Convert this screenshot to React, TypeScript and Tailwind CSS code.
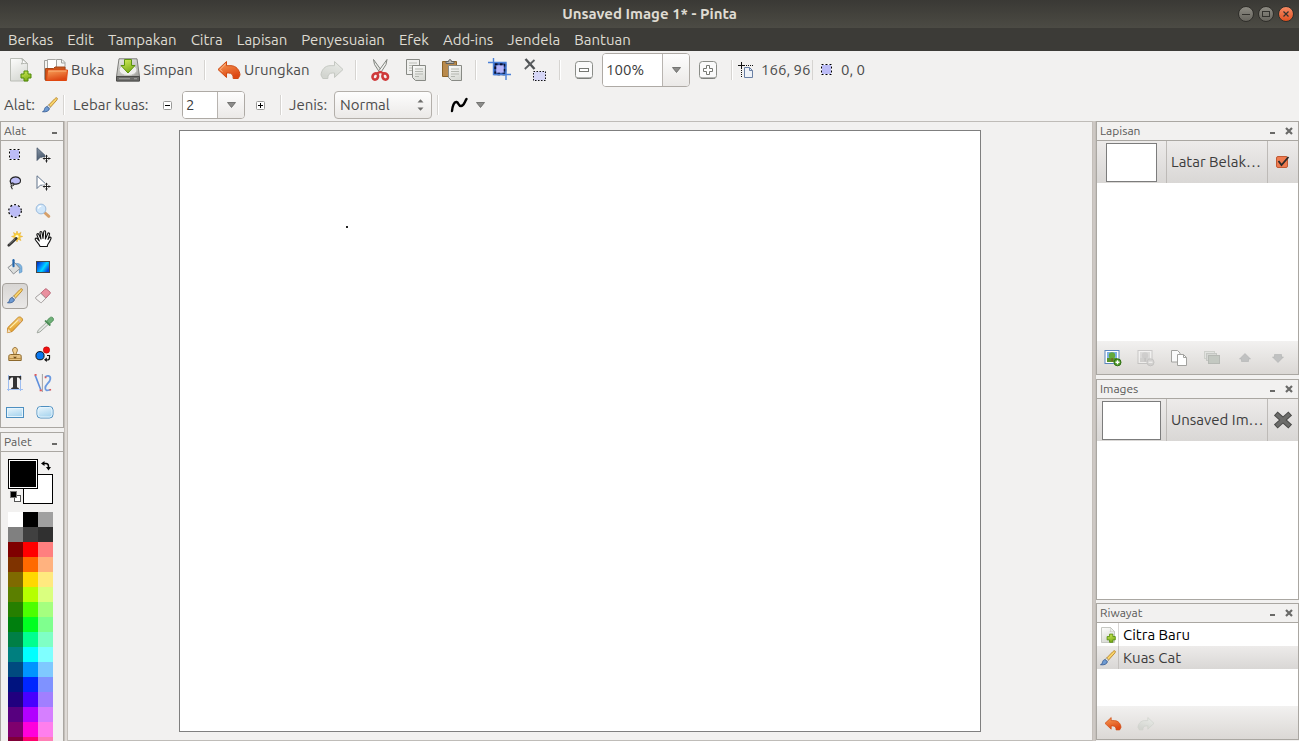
import { useState, type ReactNode } from "react";

/* ---------- shared drawings ---------- */

type IconProps = { className?: string };

function Svg({ size = 16, view, className, children }: { size?: number; view?: number; className?: string; children: ReactNode }) {
  const box = view ?? size;
  return (
    <svg width={size} height={size} viewBox={`0 0 ${box} ${box}`} fill="none" aria-hidden="true" className={`shrink-0 ${className ?? ""}`}>
      {children}
    </svg>
  );
}

function Gradients() {
  const grads: [string, string, string][] = [
    ["g-page", "#fdfdfc", "#d9dbd6"],
    ["g-orange", "#f9a25a", "#dd4814"],
    ["g-green", "#d2ee5a", "#7fae1b"],
    ["g-steel", "#ecece9", "#a3a39f"],
    ["g-grey", "#eceeea", "#d3d5d0"],
    ["g-sky", "#eef8fd", "#a9d5ef"],
    ["g-gold", "#fbdc7c", "#e09a2a"],
    ["g-arrow", "#8b98a8", "#47586c"],
  ];
  return (
    <svg width="0" height="0" className="absolute" aria-hidden="true">
      <defs>
        {grads.map(([id, a, b]) => (
          <linearGradient key={id} id={id} x1="0" y1="0" x2="0.4" y2="1">
            <stop offset="0" stopColor={a} />
            <stop offset="1" stopColor={b} />
          </linearGradient>
        ))}
        <linearGradient id="g-blue" x1="0" y1="0" x2="1" y2="0.6">
          <stop offset="0" stopColor="#0018b8" />
          <stop offset="0.45" stopColor="#0090ff" />
          <stop offset="0.65" stopColor="#00d8ff" />
          <stop offset="1" stopColor="#0048e0" />
        </linearGradient>
      </defs>
    </svg>
  );
}

function Plus({ x, y, s = 1 }: { x: number; y: number; s?: number }) {
  return (
    <path
      transform={`translate(${x} ${y}) scale(${s})`}
      d="M3.5.5h4v3h3v4h-3v3h-4v-3h-3v-4h3z"
      fill="url(#g-green)"
      stroke="#4e8a06"
    />
  );
}

const NewIcon = () => (
  <Svg size={24}>
    <path d="M2.5 .5h12l5 5v17.500h-17z" fill="url(#g-page)" stroke="#babdb6" />
    <path d="M13.500 .5c1.500 1.800 1.300 4-.2 5.500 2.500-.8 4.500-.8 6.200-.5z" fill="#fff" stroke="#b0b3ac" />
    <Plus x={12.500} y={12.500} />
  </Svg>
);

const NewSmallIcon = () => (
  <Svg>
    <path d="M1.500 .5h9l4 4v11h-13z" fill="url(#g-page)" stroke="#c6c8c3" />
    <path d="M10.500 .5c.8 1.500.4 3-.5 4 2-.5 3.500-.4 4.500 0z" fill="#fff" stroke="#bfc1bb" strokeWidth=".8" />
    <Plus x={6.700} y={6.700} s={0.82} />
  </Svg>
);

const OpenIcon = () => (
  <Svg size={24}>
    <path d="M.5 2.500h6v19h-6z" fill="#f4f4f2" stroke="#a0a09c" />
    <path d="M3.500 1.500h8l3 3v10h-11z" fill="#fff" stroke="#a8a8a4" />
    <path d="M12.500 1.500h5.500l3 3v8h-8.500z" fill="#f6f6f4" stroke="#a0a09c" />
    <path d="M17.500 1.500v3.500h3.500" stroke="#a0a09c" />
    <path d="M1.500 22.500v-12h8l1.500-1.500h10v13.500z" fill="#c9571c" stroke="#a8481a" />
    <path d="M2.500 22.500l1-10.500h20l-1 10.500z" fill="url(#g-orange)" stroke="#e0470f" />
    <path d="M4.500 13h18" stroke="#f9b37a" />
  </Svg>
);

const SaveIcon = () => (
  <Svg size={24}>
    <path d="M3 .8h18l2.500 17.700v4.500h-23v-4.500z" fill="url(#g-steel)" stroke="#7c7c79" />
    <path d="M.5 18.500h23v4.500h-23z" fill="#6c6c6a" stroke="#4a4a48" />
    <path d="M3 20.700h11M18 20.700h3" stroke="#a2a29f" />
    <ellipse cx="12" cy="12" rx="9" ry="5.500" fill="#efefed" stroke="#c0c0bc" />
    <path d="M8.500 1.500h7v6h3.500l-7 7.500-7-7.500h3.500z" fill="url(#g-green)" stroke="#5b920f" />
  </Svg>
);

const UNDO_PATH = "M9.500 3.500v4.200h4.500c5 0 8.700 4.300 9 9.300l-1.800 3.500h-5c.3-3.800-1.700-5.500-4.700-5.500h-2v4.500L1 11.500z";

const UndoIcon = () => (
  <Svg size={24}>
    <path d={UNDO_PATH} fill="url(#g-orange)" stroke="#cf4a12" strokeLinejoin="round" />
    <path d="M8.500 6l-5.500 5.500 2.500 2" stroke="#fcc39a" strokeWidth=".8" />
  </Svg>
);
const RedoIcon = () => (
  <Svg size={24}>
    <path d={UNDO_PATH} transform="matrix(-1 0 0 1 24 0)" fill="url(#g-grey)" stroke="#c5c8c2" strokeLinejoin="round" />
  </Svg>
);
const UndoSmall = () => (
  <svg width="18" height="16" viewBox="0 0 24 22" aria-hidden="true">
    <path d={UNDO_PATH} fill="url(#g-orange)" stroke="#cf4a12" strokeLinejoin="round" />
  </svg>
);
const RedoSmall = () => (
  <svg width="18" height="16" viewBox="0 0 24 22" aria-hidden="true">
    <path d={UNDO_PATH} transform="matrix(-1 0 0 1 24 0)" fill="url(#g-grey)" stroke="#cfd1cc" strokeLinejoin="round" />
  </svg>
);

const CutIcon = () => (
  <Svg size={24}>
    <path d="M5.500 1.500l1 5 5.500 8.500 1.500-2.500z" fill="#e8e9e6" stroke="#82857f" strokeLinejoin="round" />
    <path d="M19 1.500l-1 5-5.500 8.500-1.500-2.500z" fill="#f4f4f2" stroke="#82857f" strokeLinejoin="round" />
    <ellipse cx="7.300" cy="18.500" rx="2.700" ry="3.200" stroke="#cf3a3a" strokeWidth="2.600" transform="rotate(25 7.300 18.500)" />
    <ellipse cx="17.200" cy="18.500" rx="2.700" ry="3.200" stroke="#cf3a3a" strokeWidth="2.600" transform="rotate(-25 17.200 18.500)" />
    <path d="M8.500 15.500l3.800-1.500 3.800 1.500" stroke="#cf3a3a" strokeWidth="2.200" />
  </Svg>
);

const CopyIcon = () => (
  <Svg size={24}>
    <path d="M2.500 1.500h13v15h-13z" fill="#f0f0ee" stroke="#888a85" />
    <path d="M5 5h8M5 7.500h8M5 10h6M5 12.500h3" stroke="#babdb6" />
    <path d="M8.500 7.500h13v15h-10l-3-3z" fill="url(#g-page)" stroke="#888a85" />
    <path d="M11 11h8M11 13.500h8M11 16h8M11 18.500h4" stroke="#b4b7b0" />
  </Svg>
);

const PasteIcon = () => (
  <Svg size={24}>
    <path d="M2.500 3.500h14v15h-14z" fill="#b98a4c" stroke="#8a6328" />
    <path d="M6 5.500v-2h2.500c0-2.500 3-2.500 3 0h2.500v2z" fill="#b5b5b2" stroke="#5f5f5c" />
    <path d="M8.500 7.500h13v15h-10l-3-3z" fill="url(#g-page)" stroke="#888a85" />
    <path d="M11 11h8M11 13.500h8M11 16h8M11 18.500h4" stroke="#b4b7b0" />
  </Svg>
);

const CropIcon = () => (
  <Svg size={24}>
    <rect x="7" y="6" width="10" height="10" fill="#b5b5fa" stroke="#2a4fa0" strokeWidth="2.400" />
    <rect x="7" y="6" width="10" height="10" stroke="#0a1030" strokeWidth="2.400" strokeDasharray="2.500 2.500" />
    <path d="M0 4.500h18v17.500M5.500 0v16.500h17.500" stroke="#4a80d8" strokeWidth="1.400" />
  </Svg>
);

const DeselectIcon = () => (
  <Svg size={24}>
    <path d="M1.500 1l9 10" stroke="#4f5254" strokeWidth="2.400" />
    <path d="M10.500 2L.8 11" stroke="#5b5e60" strokeWidth="1.800" />
    <rect x="9.500" y="13.500" width="12" height="9" fill="#d6d6f6" stroke="#111" strokeDasharray="1.500 1.500" />
  </Svg>
);

const ZoomBox = ({ plus }: { plus?: boolean }) => (
  <Svg size={20}>
    <rect x="1.500" y="1.500" width="17" height="17" rx="3" fill="#fafafa" stroke="#8b8d88" />
    <path d="M3 18h14" stroke="#6e706c" />
    {plus ? (
      <path d="M8.500 5.500h3v3h3v3h-3v3h-3v-3h-3v-3h3z" fill="#fff" stroke="#767873" />
    ) : (
      <rect x="5.500" y="8.500" width="9" height="3" fill="#fff" stroke="#767873" />
    )}
  </Svg>
);

const CursorPosIcon = () => (
  <Svg>
    <path d="M0 3.500h7M3.500 0v7" stroke="#111" />
    <path d="M8 3.500h7" stroke="#111" strokeDasharray="1 1" />
    <path d="M3.500 8v7" stroke="#111" strokeDasharray="1 1" />
    <path d="M6.500 5.500h5l3 3v7h-8z" fill="#eef2f8" stroke="#6a80a4" />
    <path d="M11.500 5.500v3h3" stroke="#6a80a4" />
  </Svg>
);

const RectSelectIcon = () => (
  <Svg>
    <rect x="2.500" y="2.500" width="10" height="10" fill="#bcbcf6" stroke="#fff" />
    <rect x="2.500" y="2.500" width="10" height="10" stroke="#000" strokeDasharray="2 2" />
  </Svg>
);

const BrushIcon = ({ className }: IconProps) => (
  <Svg className={className}>
    <path d="M14.800 .8c.9.4.6 1.400 0 2.300L8.600 10 6.500 8.200 12.700 1.800c.7-.7 1.500-1.200 2.100-1z" fill="#f8d36a" stroke="#b0791a" strokeWidth=".8" />
    <path d="M6.500 8.200L8.600 10 7.300 11.500 5 9.500z" fill="#e8e8e4" stroke="#80827e" strokeWidth=".6" />
    <path d="M5 9.500l2.400 2.100c-.3 2.600-3.500 3.700-6.900 3.100 1.700-.6 1.700-1.600 2.200-3.100.4-1.200 1.300-1.900 2.300-2.100z" fill="#6f9bd2" stroke="#2d5590" strokeWidth=".8" />
  </Svg>
);

const CurveIcon = () => (
  <Svg size={20}>
    <path d="M2 16C2.500 11 4 6.500 6.500 7c2.500.5 1.500 4 4.500 4s3.500-4 5.500-7" stroke="#000" strokeWidth="2.400" strokeLinecap="round" />
  </Svg>
);

/* ---------- tool box icons ---------- */

const LassoIcon = () => (
  <Svg>
    <path d="M3.800 8.200C2 4.800 5 1.800 8.700 1.800s5.800 3 4.500 5.400C12 9.300 7 9.800 3.800 8.200z" fill="#bcbcf6" stroke="#222" strokeWidth="1.200" />
    <circle cx="5.500" cy="9.300" r="1.500" stroke="#222" />
    <path d="M4.500 10.500c-1.500 1.300.8 2 .8 3.800" stroke="#222" strokeWidth="1.200" />
  </Svg>
);
const EllipseSelectIcon = () => (
  <Svg>
    <circle cx="8" cy="8" r="6.300" fill="#bcbcf6" stroke="#fff" />
    <circle cx="8" cy="8" r="6.300" stroke="#000" strokeWidth="1.200" strokeDasharray="2 2" />
  </Svg>
);
const MoveBadge = () => (
  <>
    <path d="M11.500 7.500v8M7.500 11.500h8" stroke="#fff" strokeWidth="3" />
    <path d="M11.500 8v7.500M8 11.500h7.500" stroke="#222" />
    <path d="M10 9.500l1.500-2 1.500 2zM10 13.500l1.500 2 1.500-2zM9.500 10l-2 1.500 2 1.500zM13.500 10l2 1.500-2 1.500z" fill="#222" />
  </>
);
const MoveSelectedIcon = () => (
  <Svg>
    <path d="M2 .8v12.700l3.300-3.300h5.700L11 9.200z" fill="url(#g-arrow)" stroke="#46566a" strokeWidth=".8" />
    <MoveBadge />
  </Svg>
);
const MoveSelectionIcon = () => (
  <Svg>
    <path d="M2 .8v12.700l3.300-3.300h5.700L11 9.200z" fill="#fff" stroke="#61738b" />
    <MoveBadge />
  </Svg>
);
const ZoomIcon = () => (
  <Svg>
    <path d="M9.500 9.500l4.300 3.800" stroke="#d6a06a" strokeWidth="3" strokeLinecap="round" />
    <circle cx="6" cy="6" r="4.900" fill="#cfe6fa" stroke="#9cbbdc" />
    <path d="M3.300 5.700c.3-1.800 1.500-2.500 3-2.500" stroke="#fff" strokeWidth="1.200" />
  </Svg>
);
const WandIcon = () => (
  <Svg>
    <path d="M10 0l1 3 3-1.500L12.700 4.500l3 1-3 1L14 9.500 11 8.200 10 11 9 8 6 9.500 7.500 6.500l-3-1 3-1L6.500 1.500 9 3z" fill="#fbd33c" stroke="#e6a822" strokeWidth=".5" />
    <circle cx="10" cy="5.500" r="1.600" fill="#fffce0" />
    <path d="M1.800 14.300l7.500-7" stroke="#333" strokeWidth="2.600" strokeLinecap="round" />
    <path d="M2.200 13.200l6-5.700" stroke="#aaa" strokeWidth=".7" />
  </Svg>
);
const HandIcon = () => (
  <Svg size={18} view={18}>
    <path
      d="M6 16.500c-.4-2-3-4.200-4.600-6.800-.8-1.300.8-2.200 1.900-1.100L5.300 11 3 5.200c-.6-1.500 1.200-2.100 1.800-.7L7 9 6 2.800c-.2-1.600 1.700-1.800 2-.2L9 8.500l.7-6.700c.2-1.500 2-1.300 1.900.2L11.400 9l2.300-5.300c.6-1.400 2.200-.7 1.800.7L14 9.500l1.200-1.800c.8-1.200 2.300-.4 1.700 1-.9 2.300-1.700 3.900-2.800 5.300-.6.8-.8 1.500-.8 2.500z"
      fill="#fff"
      stroke="#111"
      strokeWidth="1.100"
      strokeLinejoin="round"
    />
  </Svg>
);
const BucketIcon = () => (
  <Svg>
    <path d="M8.500 4.500c4-.5 6.500 1.500 6.500 4.500v4l-2.700 1.200c.2-3 .2-5-3-6.700z" fill="#7fb4df" stroke="#4a86bd" strokeWidth=".5" />
    <path d="M1 8.500L7.500 3.500 13 9.500l-6.500 5.500z" fill="#dcdedd" stroke="#83878a" strokeWidth=".9" />
    <path d="M2.500 9.500L8 5.500" stroke="#fff" />
    <path d="M6.500 1.200v6" stroke="#2166ac" strokeWidth="2.200" strokeLinecap="round" />
  </Svg>
);
const GradientIcon = () => (
  <Svg>
    <rect x="1.500" y="2.500" width="13" height="11" fill="url(#g-blue)" stroke="#454545" />
  </Svg>
);
const EraserIcon = () => (
  <Svg>
    <path d="M5.800 5.300l4-4c.6-.6 1.300-.6 1.900-.1l3.200 2.700c.6.500.6 1.200.1 1.800l-4.200 4.500z" fill="#e9909f" stroke="#b05265" strokeWidth=".8" />
    <path d="M5.800 5.300l5 4.900-3.800 4c-.5.600-1.200.6-1.800.1L1 10.900c-.6-.5-.6-1.300 0-1.900z" fill="#f4f3f2" stroke="#908a8a" strokeWidth=".8" />
  </Svg>
);
const PencilIcon = () => (
  <Svg size={18} view={16}>
    <path d="M1.200 14.800l.4-4.500L10.500 1.500c.9-.9 2.300-.8 3.200 0s1.500 2 .6 3L5.500 13.800z" fill="url(#g-gold)" stroke="#bd7d1e" strokeWidth=".8" strokeLinejoin="round" />
    <path d="M3.500 10.500L11.700 2.700" stroke="#fff0b4" />
    <path d="M1.200 14.800l.6-3.300 2.600 2.300z" fill="#f3dfc0" />
    <path d="M10.800 3l2.200 2.200" stroke="#e6b9a0" strokeWidth="1.500" />
  </Svg>
);
const PickerIcon = () => (
  <Svg size={18} view={16} className="ml-1">
    <path d="M1 15l1-2.500 7.500-7 1.700 1.700-7.700 7z" fill="#e4e7e3" stroke="#9aa098" strokeWidth=".8" />
    <path d="M8.500 4.500l3.800 3.500" stroke="#4a8a54" strokeWidth="1.600" strokeLinecap="round" />
    <path d="M9.500 4.500l2.500-2.800c1-1 2.500-.8 3.100 0s.7 1.900-.2 2.800L12 7z" fill="#6fb078" stroke="#4a8a54" strokeWidth=".8" />
  </Svg>
);
const StampIcon = () => (
  <Svg>
    <path d="M6.800 8.500c.2-2-1.200-2.800-1.200-4.300 0-1.700 1.100-2.700 2.400-2.700s2.400 1 2.400 2.700c0 1.500-1.400 2.300-1.200 4.300z" fill="#f2cf8e" stroke="#9a7338" />
    <path d="M1.800 14.500v-4.300c0-.9.800-1.700 1.700-1.700h9c.9 0 1.700.8 1.700 1.700v4.300z" fill="#e6c180" stroke="#8c682c" />
    <path d="M1.800 12.500h12.400" stroke="#b98f48" />
    <path d="M6 10.700h4l-2 2z" fill="#6a4a18" />
  </Svg>
);
const RecolorIcon = () => (
  <Svg>
    <circle cx="11.500" cy="4" r="3.200" fill="#f01010" stroke="#a00" strokeWidth=".5" />
    <circle cx="5" cy="9.700" r="4.100" fill="#0a78f0" stroke="#111" />
    <path d="M12 9.500h2.500v2.500c0 1.300-.8 2-2.500 2h-1" stroke="#111" strokeWidth="1.200" />
    <path d="M11.800 11.500v4.500l-2.800-2.300z" fill="#111" />
  </Svg>
);
const TextIcon = () => (
  <Svg>
    <path d="M1.500 0v16M13.500 0v16M0 14.500h16" stroke="#9dbdf0" />
    <path d="M1.800 1h12.400v3.800h-1.100c-.3-1.700-.9-2.300-3.100-2.300V11.800c0 .8.500 1.100 1.800 1.100v1.100H4.200v-1.100c1.300 0 1.800-.3 1.800-1.100V2.500c-2.200 0-2.800.6-3.100 2.300H1.800z" fill="#333" />
  </Svg>
);
const LineCurveIcon = () => (
  <Svg size={18} view={16}>
    <path d="M1 1l5 13" stroke="#5e8fdd" strokeWidth="1.400" />
    <path d="M7.500 0v16" stroke="#aaa" />
    <path d="M10 3c1-2 5-2 4.500 1.500S10 9 10 12.500s3.500 1.500 4.500 1.500" stroke="#6c9ae0" strokeWidth="1.600" />
    <path d="M.5 .8h1.800M5 14.500h2M9.500 3h1.500M13.700 14h1.500" stroke="#e05858" strokeWidth="1.500" />
  </Svg>
);
const RectIcon = () => (
  <Svg size={18}>
    <rect x=".5" y="4.500" width="17" height="10" fill="url(#g-sky)" stroke="#4d8fc0" />
    <rect x="1.500" y="5.500" width="15" height="8" stroke="#e6f4fc" />
  </Svg>
);
const RoundRectIcon = () => (
  <Svg size={18} className="ml-1">
    <rect x="1" y="3.500" width="16" height="11.500" rx="3.500" fill="url(#g-sky)" stroke="#4d8fc0" />
    <rect x="2" y="4.500" width="14" height="9.500" rx="2.500" stroke="#e6f4fc" />
  </Svg>
);

/* ---------- layer pad icons ---------- */

const Landscape = ({ faded }: { faded?: boolean }) => (
  <Svg size={18}>
    <g opacity={faded ? 0.4 : 1}>
      <rect x="1" y="1.500" width="14" height="13" fill="#fff" stroke={faded ? "#999" : "#5b86bd"} />
      <rect x="3" y="3" width="10" height="6" fill={faded ? "#c8c8c8" : "#7db0e6"} />
      <rect x="3" y="9" width="10" height="4" fill={faded ? "#b4b4b4" : "#57942c"} />
      <circle cx="8" cy="6.500" r="3.200" fill={faded ? "#aaa" : "#63a93b"} />
      <path d="M7.500 9h1.200v3.500h-1.200z" fill={faded ? "#888" : "#7d5523"} />
      <circle cx="13.500" cy="13.300" r="3.500" fill={faded ? "#bbb" : "#4f9a2a"} stroke={faded ? "#999" : "#2f6f12"} />
      <path d={faded ? "M11.500 13.300h4" : "M11.500 13.300h4M13.500 11.300v4"} stroke="#fff" strokeWidth="1.400" />
    </g>
  </Svg>
);
const DuplicateIcon = () => (
  <Svg size={18}>
    <path d="M1.500 1.500h6l2.500 2.500v9h-8.500z" fill="#fafafa" stroke="#a2a29f" />
    <path d="M7.500 5.500h6l3 3v8h-9z" fill="#fff" stroke="#a2a29f" />
    <path d="M13.500 5.500v3h3" stroke="#a2a29f" />
  </Svg>
);
const MergeIcon = () => (
  <Svg size={18}>
    <rect x="1.500" y="2.500" width="10" height="7" fill="#e2e3e0" stroke="#ced0cb" />
    <rect x="3.500" y="4.500" width="10" height="7" fill="#d6d8d4" stroke="#c5c7c3" />
    <rect x="5.500" y="6.500" width="11" height="8" fill="#c3c8c1" stroke="#b6b9b4" />
  </Svg>
);
const ArrowPadIcon = ({ down }: { down?: boolean }) => (
  <Svg size={18}>
    <path d={down ? "M9 13.500L3.500 8h2V5.500h7V8h2z" : "M9 4.500L14.500 10h-2v2.500h-7V10h-2z"} fill="#c0c1c1" stroke="#b0b1b1" strokeWidth=".6" />
  </Svg>
);
const BigCross = () => (
  <Svg size={20}>
    <path d="M4.800 5.300l10.400 9.400M15.200 5.300L4.800 14.700" stroke="#4a4a48" strokeWidth="5.500" strokeLinecap="square" />
    <path d="M4.800 5.300l10.400 9.400M15.200 5.300L4.800 14.700" stroke="#6c6c6a" strokeWidth="3.500" strokeLinecap="square" />
  </Svg>
);

const SwapIcon = () => (
  <Svg size={10}>
    <path d="M2.500 2.500h2.500c2 0 2.500.8 2.500 3v2" stroke="#000" strokeWidth="1.500" />
    <path d="M0 2.500L3.500 0v5zM5 6h5l-2.500 3.500z" fill="#000" />
  </Svg>
);
const ResetIcon = () => (
  <Svg size={11}>
    <rect x="4.500" y="4.500" width="6" height="6" fill="#fff" stroke="#555" />
    <rect x=".5" y=".5" width="6" height="6" fill="#000" stroke="#777" />
  </Svg>
);

const DownArrow = () => (
  <svg width="9" height="6" viewBox="0 0 9 6" aria-hidden="true">
    <path d="M.5 .5h8L4.500 5.500z" fill="#8c8c8a" stroke="#62625f" strokeWidth=".8" />
  </svg>
);

/* ---------- toolbar pieces ---------- */

const Separator = () => <span className="mx-[5px] h-5 w-0.5 shrink-0 border-r border-white bg-[#d6d4d1]" />;

function ToolButton({ label, children, text, textWidth = "" }: { label: string; children: ReactNode; text?: boolean; textWidth?: string }) {
  return (
    <button aria-label={label} className="flex h-9 shrink-0 items-center gap-[3px] px-1.5">
      {children}
      {text && <span className={`whitespace-nowrap ${textWidth}`}>{label}</span>}
    </button>
  );
}

function Combo({ label, id, initial, size }: { label: string; id: string; initial: string; size: "large" | "small" }) {
  const [value, setValue] = useState(initial);
  const large = size === "large";
  return (
    <div className={`flex shrink-0 overflow-hidden rounded border border-[#aeaaa5] bg-white ${large ? "h-[34px] w-[88px]" : "h-7 w-[63px]"}`}>
      <input
        id={id}
        aria-label={label}
        value={value}
        onChange={(e) => setValue(e.target.value)}
        className="min-w-0 flex-1 bg-white px-[3px] text-[#3c3c3c] outline-none"
      />
      <button
        aria-label={`${label} options`}
        className="flex w-[27px] shrink-0 items-center justify-center border-l border-[#b8b4b0] bg-linear-to-b from-[#fdfdfd] to-[#ebe9e7]"
      >
        <DownArrow />
      </button>
    </div>
  );
}

function StepButton({ label, plus }: { label: string; plus?: boolean }) {
  return (
    <button aria-label={label} className="flex h-7 w-[30px] shrink-0 items-center justify-center">
      <svg width="9" height="9" viewBox="0 0 9 9" aria-hidden="true">
        <rect x=".5" y=".5" width="8" height="8" rx="1" fill="#fff" stroke="#9a9a98" />
        <path d={plus ? "M2 4.500h5M4.500 2v5" : "M2 4.500h5"} stroke="#000" />
      </svg>
    </button>
  );
}

/* ---------- dock pieces ---------- */

function PadHeader({ title, closable }: { title: string; closable?: boolean }) {
  return (
    <header className="flex h-[19px] shrink-0 items-center border-b border-[#aaa7a2] pr-[3px] pl-[3px] text-xs text-[#5a5a58]">
      <h2 className="flex-1">{title}</h2>
      <button aria-label={`Minimize ${title}`} className="flex h-4 w-3 items-center justify-center">
        <span className="mt-1 h-0.5 w-[5px] bg-[#6a6a68]" />
      </button>
      {closable && (
        <button aria-label={`Close ${title}`} className="ml-[5px] flex h-4 w-3 items-center justify-center">
          <svg width="8" height="8" viewBox="0 0 8 8" aria-hidden="true">
            <path d="M1 1l6 6M7 1L1 7" stroke="#6a6a68" strokeWidth="2.200" />
          </svg>
        </button>
      )}
    </header>
  );
}

function PadRow({ thumb, name, action }: { thumb: ReactNode; name: string; action: ReactNode }) {
  return (
    <li className="flex h-[42px] bg-linear-to-b from-[#edebea] to-[#d9d7d5] text-[#3c3c3c]">
      <div className="flex w-[69px] shrink-0 items-center justify-center">{thumb}</div>
      <div className="flex min-w-0 flex-1 items-center border-x border-[#bdbab7] pl-1">
        <span className="truncate">{name}</span>
      </div>
      <div className="flex w-[30px] shrink-0 items-center justify-center">{action}</div>
    </li>
  );
}

const PAD = "flex flex-col border border-[#aaa7a2] bg-[#f2f1f0]";
const PAD_BAR = "flex h-[33px] shrink-0 items-center bg-linear-to-b from-[#f2f1f0] to-[#dbd8d5]";

const MENUS = ["Berkas", "Edit", "Tampakan", "Citra", "Lapisan", "Penyesuaian", "Efek", "Add-ins", "Jendela", "Bantuan"];

const TOOLS: [string, ReactNode][] = [
  ["Rectangle Select", <RectSelectIcon />],
  ["Move Selected Pixels", <MoveSelectedIcon />],
  ["Lasso Select", <LassoIcon />],
  ["Move Selection", <MoveSelectionIcon />],
  ["Ellipse Select", <EllipseSelectIcon />],
  ["Zoom", <ZoomIcon />],
  ["Magic Wand", <WandIcon />],
  ["Pan", <HandIcon />],
  ["Paint Bucket", <BucketIcon />],
  ["Gradient", <GradientIcon />],
  ["Kuas Cat", <BrushIcon />],
  ["Eraser", <EraserIcon />],
  ["Pencil", <PencilIcon />],
  ["Color Picker", <PickerIcon />],
  ["Clone Stamp", <StampIcon />],
  ["Recolor", <RecolorIcon />],
  ["Text", <TextIcon />],
  ["Line/Curve", <LineCurveIcon />],
  ["Rectangle", <RectIcon />],
  ["Rounded Rectangle", <RoundRectIcon />],
];

const PALETTE = [
  "#ffffff", "#000000", "#a0a0a0", "#808080", "#404040", "#303030",
  "#7f0000", "#ff0000", "#ff7f7f", "#7f3300", "#ff6a00", "#ffb27f",
  "#7f6a00", "#ffd800", "#ffe97f", "#5b7f00", "#b6ff00", "#daff7f",
  "#267f00", "#4cff00", "#a5ff7f", "#007f0e", "#00ff21", "#7fff8e",
  "#007f46", "#00ff90", "#7fffc5", "#007f7f", "#00ffff", "#7fffff",
  "#004a7f", "#0094ff", "#7fc9ff", "#00137f", "#0026ff", "#7f92ff",
  "#21007f", "#4800ff", "#a17fff", "#57007f", "#b200ff", "#d67fff",
  "#7f006e", "#ff00dc", "#ff7fed", "#7f0037", "#ff006e", "#ff7fb6",
];

function TitleBar() {
  const dot = "flex size-4 items-center justify-center rounded-full border border-[#2f2e2a]";
  return (
    <header className="flex h-7 shrink-0 items-center bg-linear-to-b from-[#3a3935] to-[#4c4b44] px-[5px] text-[#dfdbd2]">
      <span className="w-14" />
      <h1 className="flex-1 text-center font-bold">Unsaved Image 1* - Pinta</h1>
      <div className="flex w-14 justify-between">
        <button aria-label="Minimize" className={`${dot} bg-linear-to-b from-[#8d8b83] to-[#67655e]`}>
          <span className="h-px w-2 bg-[#33322e]" />
        </button>
        <button aria-label="Maximize" className={`${dot} bg-linear-to-b from-[#8d8b83] to-[#67655e]`}>
          <span className="h-1.5 w-2 border border-[#33322e]" />
        </button>
        <button aria-label="Close" className={`${dot} bg-linear-to-b from-[#f58a63] to-[#e0501e]`}>
          <svg width="6" height="6" viewBox="0 0 6 6" aria-hidden="true">
            <path d="M.5 .5l5 5M5.500 .5l-5 5" stroke="#33322e" strokeWidth="1.200" />
          </svg>
        </button>
      </div>
    </header>
  );
}

function MainToolbar() {
  return (
    <div className="flex h-[38px] shrink-0 items-center pl-0.5">
      <ToolButton label="Baru"><NewIcon /></ToolButton>
      <ToolButton label="Buka" text textWidth="w-[33px]"><OpenIcon /></ToolButton>
      <ToolButton label="Simpan" text textWidth="w-[50px]"><SaveIcon /></ToolButton>
      <Separator />
      <ToolButton label="Urungkan" text textWidth="w-[64px]"><UndoIcon /></ToolButton>
      <ToolButton label="Redo"><RedoIcon /></ToolButton>
      <Separator />
      <ToolButton label="Cut"><CutIcon /></ToolButton>
      <ToolButton label="Copy"><CopyIcon /></ToolButton>
      <ToolButton label="Paste"><PasteIcon /></ToolButton>
      <Separator />
      <ToolButton label="Crop to Selection"><CropIcon /></ToolButton>
      <ToolButton label="Deselect"><DeselectIcon /></ToolButton>
      <Separator />
      <button aria-label="Zoom out" className="flex w-9 shrink-0 justify-center"><ZoomBox /></button>
      <Combo label="Zoom" id="zoom-level" initial="100%" size="large" />
      <button aria-label="Zoom in" className="flex w-9 shrink-0 justify-center"><ZoomBox plus /></button>
      <Separator />
      <CursorPosIcon />
      <span className="w-[58px] shrink-0 pl-[7px] whitespace-nowrap">166, 96</span>
      <span className="h-5 w-px shrink-0 bg-[#d6d4d1]" />
      <span className="ml-1.5"><RectSelectIcon /></span>
      <span className="shrink-0 pl-1.5 whitespace-nowrap">0, 0</span>
    </div>
  );
}

function BrushToolbar() {
  return (
    <div className="flex h-8 shrink-0 items-center pl-1">
      <span className="w-[38px] shrink-0 whitespace-nowrap">Alat:</span>
      <BrushIcon />
      <Separator />
      <label htmlFor="brush-width" className="ml-[3px] w-[79px] shrink-0 whitespace-nowrap">Lebar kuas:</label>
      <StepButton label="Decrease brush width" />
      <Combo label="Lebar kuas" id="brush-width" initial="2" size="small" />
      <StepButton label="Increase brush width" plus />
      <Separator />
      <label htmlFor="blend" className="ml-0.5 w-[45px] shrink-0 whitespace-nowrap">Jenis:</label>
      <div className="grid shrink-0">
        <select
          id="blend"
          className="col-start-1 row-start-1 h-7 w-[98px] appearance-none rounded border border-[#b3afaa] bg-linear-to-b from-[#fdfdfd] to-[#ebe9e7] pl-[5px] text-[#4c4c4c]"
        >
          <option>Normal</option>
          <option>Multiply</option>
        </select>
        <svg width="7" height="12" viewBox="0 0 7 12" aria-hidden="true" className="pointer-events-none col-start-1 row-start-1 mr-2 place-self-center justify-self-end">
          <path d="M.5 3.500L3.500 .3l3 3.200zM.5 8.500l3 3.200 3-3.200z" fill="#6e6e6c" />
        </svg>
      </div>
      <Separator />
      <button aria-label="Curve type" className="ml-1 flex shrink-0 items-center gap-1.5 px-0.5">
        <CurveIcon />
        <DownArrow />
      </button>
    </div>
  );
}

function ToolBox() {
  return (
    <section className={`${PAD} h-[307px] shrink-0`}>
      <PadHeader title="Alat" />
      <div className="grid grid-cols-2 grid-rows-[repeat(5,28px)_repeat(5,29px)] items-center pr-1.5 pl-px">
        {TOOLS.map(([name, icon]) => (
          <button
            key={name}
            aria-label={name}
            aria-pressed={name === "Kuas Cat"}
            className="flex size-[26px] items-center justify-center rounded border border-transparent aria-pressed:border-[#a5a19c] aria-pressed:bg-linear-to-b aria-pressed:from-[#d8d6d4] aria-pressed:to-[#eae8e7]"
          >
            {icon}
          </button>
        ))}
      </div>
    </section>
  );
}

function PalettePad() {
  return (
    <section className={`${PAD} mt-1 min-h-0 flex-1 overflow-hidden border-b-0`}>
      <PadHeader title="Palet" />
      <div className="relative mt-[7px] ml-[7px] h-[53px] w-[46px] shrink-0">
        <button aria-label="Secondary color" className="absolute top-[15px] left-[15px] size-[30px] border border-black bg-white" />
        <button aria-label="Primary color" className="absolute top-0 left-0 flex size-[30px] border border-black bg-white p-px">
          <span className="flex-1 self-stretch bg-black" />
        </button>
        <button aria-label="Swap colors" className="absolute top-0.5 left-[33px]"><SwapIcon /></button>
        <button aria-label="Reset colors" className="absolute top-8 left-0.5"><ResetIcon /></button>
      </div>
      <div className="ml-[7px] grid w-[45px] shrink-0 grid-cols-3">
        {PALETTE.map((c) => (
          <button key={c} aria-label={c} className="h-[15px]" style={{ backgroundColor: c }} />
        ))}
      </div>
    </section>
  );
}

function RightDock() {
  return (
    <aside className="flex w-[203px] shrink-0 flex-col pb-px">
      <section className={`${PAD} shrink-0`}>
        <PadHeader title="Lapisan" closable />
        <ul className="h-[200px] bg-white">
          <PadRow
            name="Latar Belakang"
            thumb={<span className="h-[39px] w-[51px] border border-[#7c7c7c] bg-white" />}
            action={
              <label className="grid">
                <input
                  type="checkbox"
                  defaultChecked
                  aria-label="Latar Belakang"
                  className="col-start-1 row-start-1 size-3 appearance-none self-center rounded-xs border border-[#c05a34] bg-[#ef7b50]"
                />
                <svg width="14" height="12" viewBox="0 0 14 12" aria-hidden="true" className="pointer-events-none col-start-1 row-start-1">
                  <path d="M2.500 5l3 4 7-8" stroke="#2c2c2a" strokeWidth="1.800" fill="none" />
                </svg>
              </label>
            }
          />
        </ul>
        <div className={`${PAD_BAR} gap-[15px] pl-[7px]`}>
          <button aria-label="Add layer"><Landscape /></button>
          <button aria-label="Delete layer" disabled><Landscape faded /></button>
          <button aria-label="Duplicate layer"><DuplicateIcon /></button>
          <button aria-label="Merge layer down" disabled><MergeIcon /></button>
          <button aria-label="Move layer up" disabled><ArrowPadIcon /></button>
          <button aria-label="Move layer down" disabled><ArrowPadIcon down /></button>
        </div>
      </section>

      <section className={`${PAD} mt-1 min-h-0 flex-1`}>
        <PadHeader title="Images" closable />
        <ul className="flex-1 bg-white">
          <PadRow
            name="Unsaved Image 1"
            thumb={<span className="h-[39px] w-[59px] border border-[#7c7c7c] bg-white" />}
            action={<button aria-label="Close image"><BigCross /></button>}
          />
        </ul>
      </section>

      <section className={`${PAD} mt-[3px] shrink-0`}>
        <PadHeader title="Riwayat" closable />
        <ul className="h-[83px] bg-white text-black">
          <li className="flex h-[23px] items-center">
            <span className="flex h-full w-[22px] items-center border-r border-[#d8d6d4] pl-[3px]"><NewSmallIcon /></span>
            <span className="pl-1">Citra Baru</span>
          </li>
          <li className="flex h-[23px] items-center bg-linear-to-b from-[#edebea] to-[#d9d7d5] text-[#3c3c3c]">
            <span className="flex h-full w-[22px] items-center border-r border-[#c4c1be] pl-[3px]"><BrushIcon /></span>
            <span className="pl-1">Kuas Cat</span>
          </li>
        </ul>
        <div className={`${PAD_BAR} gap-[15px] pl-[7px]`}>
          <button aria-label="Undo"><UndoSmall /></button>
          <button aria-label="Redo" disabled><RedoSmall /></button>
        </div>
      </section>
    </aside>
  );
}

export default function App() {
  return (
    <div className="flex h-screen flex-col overflow-hidden bg-[#f2f1f0] font-['Ubuntu','Noto_Sans',sans-serif] text-[15px] leading-5 text-[#4c4c4c]">
      <Gradients />
      <TitleBar />
      <nav className="flex h-[23px] shrink-0 items-center gap-[14px] bg-[#3c3b37] pl-2 text-[#dfdbd2]">
        {MENUS.map((m) => (
          <button key={m} className="whitespace-nowrap">{m}</button>
        ))}
      </nav>
      <MainToolbar />
      <BrushToolbar />
      <div className="flex min-h-0 flex-1">
        <aside className="flex w-16 shrink-0 flex-col">
          <ToolBox />
          <PalettePad />
        </aside>
        <div className="w-1 shrink-0 border-x border-[#c4bfba] bg-[#dedad6]" />
        <main className="flex min-w-0 flex-1 items-center justify-center overflow-hidden border-y border-[#bfbcb8]">
          <svg width="802" height="602" viewBox="0 0 802 602" role="img" aria-label="Kanvas" className="shrink-0">
            <rect x=".5" y=".5" width="801" height="601" fill="#fff" stroke="#7f7f7f" />
            <rect x="167" y="96" width="2" height="2" fill="#222" />
          </svg>
        </main>
        <div className="w-1 shrink-0 border-x border-[#c4bfba] bg-[#cdc8c4]" />
        <RightDock />
      </div>
    </div>
  );
}
